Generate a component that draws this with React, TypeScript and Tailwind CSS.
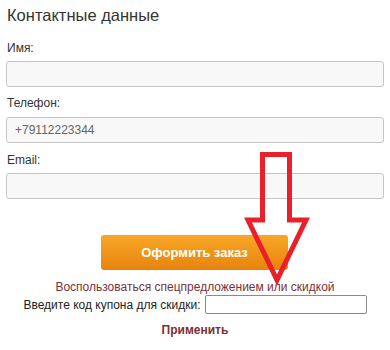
import React from "react";

export default function App() {
  const font = { fontFamily: '"Liberation Sans", Arial, sans-serif' };
  return (
    <div className="relative w-[390px] h-[350px] bg-white overflow-hidden" style={font}>
      <div className="px-[6px] pt-[4px] text-[#333333]">
        <div className="text-[16.5px] leading-[22px] pl-[1px]">Контактные данные</div>
        <div className="mt-[14px] text-[12px] leading-[16px] pl-[1px]">Имя:</div>
        <div className="mt-[5px] h-[26px] rounded-[3px] border border-[#c6c6c6] bg-[#f8f8f8]" />
        <div className="mt-[8px] text-[12px] leading-[16px] pl-[1px]">Телефон:</div>
        <div className="mt-[6px] h-[26px] rounded-[3px] border border-[#c6c6c6] bg-[#f8f8f8] flex items-center px-[8px] text-[12px] text-[#666666]">
          +79112223344
        </div>
        <div className="mt-[9px] text-[12px] leading-[16px] pl-[1px]">Email:</div>
        <div className="mt-[5px] h-[26px] rounded-[3px] border border-[#c6c6c6] bg-[#f8f8f8]" />
        <div className="mt-[36px] flex justify-center">
          <div className="ml-[-1px] w-[187px] h-[35px] rounded-[3px] bg-gradient-to-b from-[#f8a725] to-[#e8830c] flex items-center justify-center text-white font-bold text-[13px]">
            Оформить заказ
          </div>
        </div>
        <div className="mt-[9px] text-center text-[12px] leading-[16px] text-[#7b3038]">
          Воспользоваться спецпредложением или скидкой
        </div>
        <div className="flex justify-center items-center gap-[4px] text-[12px] leading-[16px] text-[#222222]">
          <span>Введите код купона для скидки:</span>
          <div className="w-[162px] h-[19px] border border-[#8a8a8a] rounded-[2px] bg-white" />
        </div>
        <div className="mt-[8px] text-center text-[12px] leading-[16px] font-bold text-[#7b3038]">
          Применить
        </div>
      </div>
      <svg className="absolute left-0 top-0" width="390" height="350" viewBox="0 0 390 350">
        <polygon
          points="262.5,154.5 289.5,154.5 289.5,220 306,220 277,280 248,220 262.5,220"
          fill="none"
          stroke="#e8202a"
          strokeWidth="5"
          strokeLinejoin="miter"
        />
      </svg>
    </div>
  );
}
